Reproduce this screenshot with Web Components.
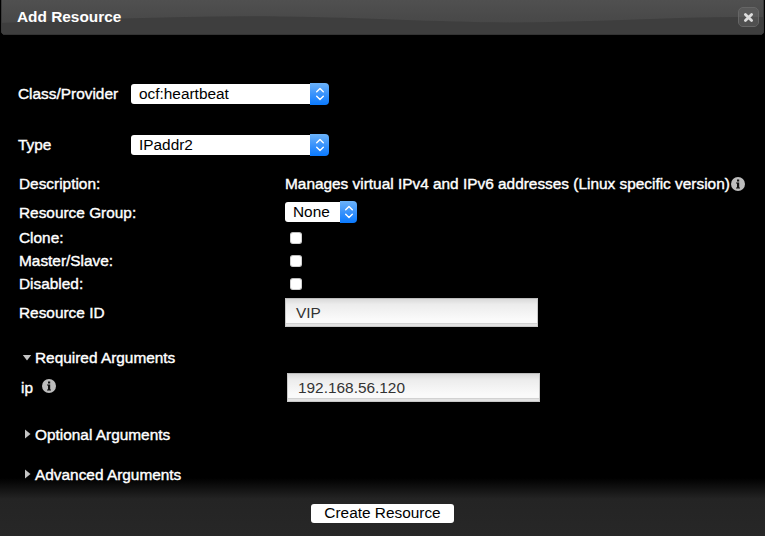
<!DOCTYPE html>
<html lang="en"><head><meta charset="utf-8"><title>Add Resource</title>
<style>
html,body{margin:0;height:100%;background:#000;overflow:hidden}
body{font-family:"Liberation Sans",Arial,sans-serif;font-size:15.4px;color:#fff}
</style></head><body>
<resource-dialog></resource-dialog>
<script>
const define = (name, html, setup) => customElements.define(name, class extends HTMLElement {
  constructor(){
    super();
    this.attachShadow({mode:'open'}).innerHTML = html;
  }
  connectedCallback(){ if (setup) setup(this, this.shadowRoot); }
});

define('dialog-header', `<style>
:host{display:block;height:35px;position:relative}
svg.bg{position:absolute;inset:0}
.bar{position:relative;display:flex;justify-content:space-between;height:35px;padding:0 6px 0 17px;box-sizing:border-box}
.title{font-weight:700;line-height:33px}
.close{width:21px;height:20px;margin-top:7px}
</style>
<svg class="bg" width="765" height="35">
<defs>
<linearGradient id="a" x2="0" y2="1"><stop stop-color="#505050"/><stop offset="1" stop-color="#434343"/></linearGradient>
<clipPath id="c"><path d="M1 0H764V30Q764 35 759 35H6Q1 35 1 30Z"/></clipPath></defs>
<g clip-path="url(#c)"><rect width="765" height="35" fill="url(#a)"/>
<path d="M0 23C90 20 180 15.500 280 16.500C370 17.500 430 22 510 22.500C600 22 680 16 765 17V35H0Z" fill="#3e3e3e"/>
<path d="M1 34.500H764" stroke="#333"/><path d="M1.500 0V35M763.500 0V35" stroke="#3a3a3a"/></g></svg>
<div class="bar"><span class="title"><slot></slot></span>
<svg class="close" viewBox="0 0 21 20"><rect x=".5" y=".5" width="20" height="19" rx="4.500" fill="#595959" stroke="#666"/><path d="M1 10H20V15Q20 19 16 19H5Q1 19 1 15Z" fill="#505050"/><path d="M7.400 7.400L13.600 13.600M13.600 7.400L7.400 13.600" stroke="#dcdcdc" stroke-width="2.800" stroke-linecap="round"/></svg></div>`);

define('form-row', `<style>
:host{display:grid;grid-template-columns:var(--col,266px) auto;justify-content:start;align-items:center;height:var(--h,24px);padding-left:var(--pad,19px)}
.label{display:flex;align-items:center;white-space:nowrap;-webkit-text-stroke:.4px #fff;line-height:20px;padding-top:var(--drop,0)}
</style><div class="label"><slot name="label"></slot></div><slot></slot>`);

define('popup-select', `<style>
:host{display:flex;width:var(--w,198px);height:20px;align-items:center;color:#000}
.v{flex:1;height:20px;line-height:19px;background:#fff;border-radius:3px 0 0 3px;padding-left:8px;white-space:nowrap}
.cap{width:var(--cap,19px);height:22px;border-radius:0 4px 4px 0;background:linear-gradient(#6cb3fa,#3a93fb 50%,#0a7aff);display:flex;justify-content:center;align-items:center}
</style><div class="v"><slot></slot></div><div class="cap"><svg width="10" height="14" fill="none" stroke="#fff" stroke-width="1.400" stroke-linecap="round" stroke-linejoin="round"><path d="M1.700 4.700L5 1.400L8.300 4.700M1.700 9.300L5 12.600L8.300 9.300"/></svg></div>`);

define('check-box', `<style>
:host{display:block;width:12px;height:12px;box-sizing:border-box;margin-left:5px;background:#fff;border:1px solid #cfcfcf;border-top-color:#bbb;border-radius:3px}
</style>`);

define('text-field', `<style>
:host{display:block;width:253px;height:29px;box-sizing:border-box;border:1px solid #c8c8c8;border-top-color:#bcbcbc;background:linear-gradient(#dadada,#ececec 20%,#fafafa 75%,#fafafa 24px,#d2d2d2 24px,#d2d2d2 25px,#e2e2e2 25px);color:#333;line-height:27px;padding-left:10px}
</style><slot></slot>`);

define('info-icon', `<style>:host{display:block;width:14px;height:14px}svg{display:block}</style>
<svg width="14" height="14"><circle cx="7" cy="7" r="7" fill="#bdbdbd"/><path d="M6 2.500H8.200V4.500H6ZM5 5.500H8.200V10.500H9V11.500H5V10.500H6V6.500H5Z" fill="#111"/></svg>`);

define('section-toggle', `<style>
:host{display:flex;align-items:center;height:30px;padding-left:22px;-webkit-text-stroke:.4px #fff}
svg{width:13px;height:12px}
</style><svg><path fill="#c4c4c4"/></svg><slot></slot>`,
(host, root) => root.querySelector('path').setAttribute('d', host.hasAttribute('open') ? 'M.800 3H9.200L5 8.500Z' : 'M3 .500L8.500 5L3 9.500Z'));

define('push-button', `<style>
:host{display:block;width:143px;height:19px;background:#fff;border-radius:3px;color:#000;text-align:center;line-height:18px}
</style><slot></slot>`);

define('resource-dialog', `<style>
:host{display:flex;flex-direction:column;height:536px;background:#000}
main{height:443px;box-sizing:border-box;padding-top:33px;position:relative;z-index:1}
.top{--col:113px;--pad:18px;--h:51px}
.desc{display:flex;align-items:center;gap:1px;-webkit-text-stroke:.4px #fff;white-space:nowrap}
.ip{margin:0 0 4px 9px}
.rid{--h:34px;--drop:2px}
footer{flex:1;display:flex;justify-content:center;align-items:flex-start;box-sizing:border-box;padding-top:26px;background:linear-gradient(#000,#242424 21px,#272727);}
</style>
<dialog-header>Add Resource</dialog-header>
<main>
<form-row class="top"><span slot="label">Class/Provider</span><popup-select>ocf:heartbeat</popup-select></form-row>
<form-row class="top"><span slot="label">Type</span><popup-select>IPaddr2</popup-select></form-row>
<form-row style="--h:27px"><span slot="label">Description:</span><div class="desc"><span>Manages virtual IPv4 and IPv6 addresses (Linux specific version)</span><info-icon></info-icon></div></form-row>
<form-row style="--h:29px;--drop:2px"><span slot="label">Resource Group:</span><popup-select style="--w:72px;--cap:17px">None</popup-select></form-row>
<form-row style="--h:23px"><span slot="label">Clone:</span><check-box></check-box></form-row>
<form-row style="--h:23px"><span slot="label">Master/Slave:</span><check-box></check-box></form-row>
<form-row style="--h:23px;--drop:1px"><span slot="label">Disabled:</span><check-box></check-box></form-row>
<form-row class="rid"><span slot="label">Resource ID</span><text-field>VIP</text-field></form-row>
<section-toggle open style="margin-top:14px">Required Arguments</section-toggle>
<form-row style="--h:29px;--pad:21px"><span slot="label">ip</span><info-icon slot="label" class="ip"></info-icon><text-field>192.168.56.120</text-field></form-row>
<section-toggle style="margin-top:18px">Optional Arguments</section-toggle>
<section-toggle style="margin-top:10px">Advanced Arguments</section-toggle>
</main>
<footer><push-button>Create Resource</push-button></footer>`);
</script></body></html>
